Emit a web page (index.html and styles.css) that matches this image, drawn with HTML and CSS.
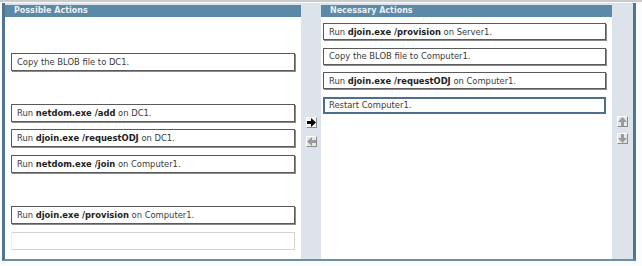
FILE: index.html
```html
<!DOCTYPE html>
<html lang="en">
<head>
    <meta charset="UTF-8">
    <title>Build List</title>
    <link rel="stylesheet" href="styles.css">
</head>
<body>
    <div class="top-line"></div>
    <div class="frame">
        <div class="panel source">
            <div class="panel-header">Possible Actions</div>
            <div class="slots">
                <div class="slot"></div>
                <div class="item"><span>Copy the BLOB file to DC1.</span></div>
                <div class="slot"></div>
                <div class="item"><span>Run <b>netdom.exe /add</b> on DC1.</span></div>
                <div class="item"><span>Run <b>djoin.exe /requestODJ</b> on DC1.</span></div>
                <div class="item"><span>Run <b>netdom.exe /join</b> on Computer1.</span></div>
                <div class="slot"></div>
                <div class="item"><span>Run <b>djoin.exe /provision</b> on Computer1.</span></div>
                <div class="slot empty"></div>
            </div>
        </div>

        <div class="side-col mid-col">
            <button class="arrow-btn">
                <svg width="9" height="9" viewBox="0 0 9 9"><path d="M0 3h4V0l5 4.5L4 9V6H0z" fill="#000"/></svg>
            </button>
            <button class="arrow-btn disabled">
                <svg width="9" height="9" viewBox="0 0 9 9"><path d="M9 3H5V0L0 4.5 5 9V6h4z" fill="#9a9a9a"/></svg>
            </button>
        </div>

        <div class="panel target">
            <div class="panel-header">Necessary Actions</div>
            <div class="slots">
                <div class="item"><span>Run <b>djoin.exe /provision</b> on Server1.</span></div>
                <div class="item"><span>Copy the BLOB file to Computer1.</span></div>
                <div class="item"><span>Run <b>djoin.exe /requestODJ</b> on Computer1.</span></div>
                <div class="item selected"><span>Restart Computer1.</span></div>
            </div>
        </div>

        <div class="side-col right-col">
            <button class="arrow-btn disabled">
                <svg width="9" height="9" viewBox="0 0 9 9"><path d="M3 9V5H0l4.5-5L9 5H6v4z" fill="#9a9a9a"/></svg>
            </button>
            <button class="arrow-btn disabled">
                <svg width="9" height="9" viewBox="0 0 9 9"><path d="M3 0v4H0l4.5 5L9 4H6V0z" fill="#9a9a9a"/></svg>
            </button>
        </div>
    </div>
</body>
</html>
```

FILE: styles.css
```css
body {
    margin: 0;
    padding: 0;
    background-color: #fbfcfd;
    font-family: "DejaVu Sans", Verdana, sans-serif;
    font-size: 8.4px;
    color: #3a3a3a;
}

.top-line {
    height: 2px;
    background-color: #c9cccf;
}

.frame {
    display: grid;
    grid-template-columns: 296px 20px 291px 21px;
    width: 628px;
    height: 254px;
    margin: 1px 0 0 2px;
    padding-top: 2px;
    background-color: #dce3ea;
    border-left: 3px solid #52758f;
    border-right: 3px solid #52758f;
    border-bottom: 2px solid #6d8ea8;
    box-sizing: content-box;
}

.panel {
    background-color: #fff;
    display: flex;
    flex-direction: column;
}

.panel-header {
    height: 12px;
    line-height: 12px;
    padding-left: 9px;
    background-color: #5c8aa6;
    color: #e9f0f5;
    font-size: 8px;
    font-weight: bold;
}

.slots {
    display: flex;
    flex-direction: column;
}

.source .slots {
    padding: 10px 0 0 6px;
    gap: 7.6px;
}

.target .slots {
    padding: 6px 0 0 2px;
    gap: 7.5px;
}

.slot,
.item {
    width: 284px;
    height: 18px;
    box-sizing: border-box;
}

.item {
    display: flex;
    align-items: center;
    padding-left: 5px;
    background-color: #fff;
    border: 1px solid #5a5a5a;
    box-shadow: 1px 1px 0 #8a8a8a;
    white-space: nowrap;
}

.item b {
    color: #1e1e1e;
}

.target .item {
    width: 283px;
    height: 17px;
}

.target .item.selected {
    border: 2px solid #4c6f8e;
    box-shadow: none;
    padding-left: 4px;
}

.slot.empty {
    border: 1px solid #d4d4d4;
    border-left-color: #f0f0f0;
}

.side-col {
    display: flex;
    flex-direction: column;
    align-items: center;
    gap: 8px;
}

.mid-col {
    padding-top: 112px;
}

.right-col {
    padding-top: 111px;
    gap: 6px;
}

.arrow-btn {
    width: 11px;
    height: 11px;
    padding: 0;
    display: flex;
    align-items: center;
    justify-content: center;
    background-color: #f4f4f4;
    border: 1px solid;
    border-color: #fff #8c8c8c #8c8c8c #fff;
}

.arrow-btn.disabled {
    background-color: #e6e6e6;
}
```
